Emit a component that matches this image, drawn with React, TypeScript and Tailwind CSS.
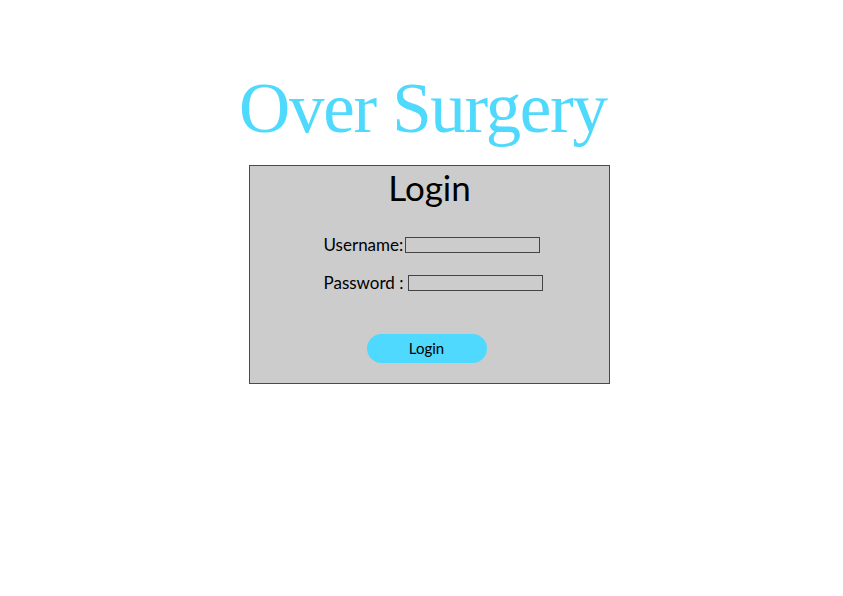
import React from 'react';

const App: React.FC = () => {
  return (
    <div className="w-[843px] h-[596px] bg-white overflow-hidden">
      <h1
        className="pt-[68px] pl-[239px] text-[71px] leading-[80px] tracking-[-1.3px] text-[#4fd9fd] whitespace-nowrap"
        style={{ fontFamily: '"Liberation Serif", "DejaVu Serif", serif' }}
      >
        Over Surgery
      </h1>

      <div
        className="ml-[249px] mt-[17px] w-[361px] h-[219px] border border-[#4a4a4a] bg-[#cccccc] flex flex-col items-center"
        style={{ fontFamily: 'Lato, "Noto Sans", sans-serif' }}
      >
        <h2 className="mt-[-1px] text-[35px] leading-[44px] text-black">Login</h2>

        <div className="mt-[27px] ml-[8px] flex flex-col gap-[21px]">
          <label className="flex items-center text-[17px] leading-[17px] text-black">
            <span>Username:</span>
            <input
              type="text"
              className="ml-[2px] w-[135px] h-[16px] border border-[#444] bg-[#cccccc] outline-none"
            />
          </label>
          <label className="flex items-center text-[17px] leading-[17px] text-black">
            <span>Password :</span>
            <input
              type="text"
              className="ml-[5px] w-[135px] h-[16px] border border-[#444] bg-[#cccccc] outline-none"
            />
          </label>
        </div>

        <button className="mt-[43px] mr-[6px] w-[120px] h-[29px] rounded-full bg-[#4fd9ff] text-[15px] text-black">
          Login
        </button>
      </div>
    </div>
  );
};

export default App;
